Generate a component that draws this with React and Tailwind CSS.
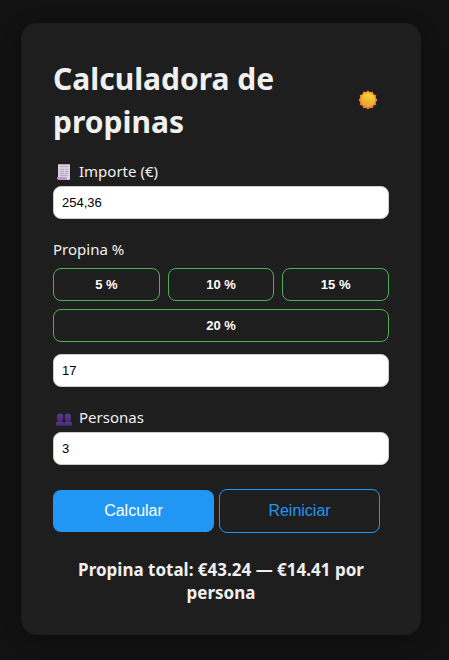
import { useState } from "react";

const FIELD =
  "block h-[33px] w-full rounded-lg border border-[#cccccc] bg-white px-2 font-['Liberation_Sans',Arial,sans-serif] text-[13px] text-black outline-none";
const TIP =
  "h-[33px] rounded-lg border border-[#4caf50] font-['Liberation_Sans',Arial,sans-serif] text-[13px] font-bold text-white";
const ACTION =
  "w-[161px] rounded-lg font-['Liberation_Sans',Arial,sans-serif] text-base";
const ICON_LABEL = "flex h-[25px] items-end gap-[7px] pl-[3px] leading-[25px]";

function SunIcon() {
  return (
    <svg viewBox="0 0 20 20" className="size-5" aria-hidden="true">
      <defs>
        <linearGradient id="sun-core" x1="0.7" y1="0" x2="0.3" y2="1">
          <stop offset="0" stopColor="#ffd83c" />
          <stop offset="1" stopColor="#dfa02f" />
        </linearGradient>
        <linearGradient id="sun-rays" x1="0" y1="0" x2="0" y2="1">
          <stop offset="0" stopColor="#ff9a2e" />
          <stop offset="1" stopColor="#ea7038" />
        </linearGradient>
      </defs>
      <path
        fill="url(#sun-rays)"
        d="M10 .5 11.8 2 14.7 1.8 15.5 4.2 18.2 5.3 17.8 7.9 19.5 10 17.8 12.1 18.2 14.7 15.5 15.8 14.7 18.2 11.8 18 10 19.5 8.2 18 5.3 18.2 4.5 15.8 1.8 14.7 2.2 12.1.5 10 2.2 7.9 1.8 5.3 4.5 4.2 5.3 1.8 8.2 2Z"
      />
      <circle cx="10" cy="10" r="7" fill="url(#sun-core)" />
    </svg>
  );
}

function ReceiptIcon() {
  return (
    <svg viewBox="0 0 16 16" className="mb-1 h-4 w-4" aria-hidden="true">
      <path fill="#d9cfe3" d="M2 .5 3 0l1 .6L5 0l1 .6L7 0l1 .6L9 0l1 .6L11 0l1 .6L13 0l1 .5V14H2Z" />
      <path
        stroke="#aaa1b8"
        strokeWidth="0.8"
        d="M4 2.500h8M4 5.500h4M9 5.500h3M4 7.500h4M9 7.500h3M4 9.500h4M9 9.500h3M4 11.500h8"
      />
      <path fill="#b79ccb" d="M1 13h9.500c0 1.200.8 1.500 1.500 1.500V16H2.500C1.500 16 1 15 1 13Z" />
      <path fill="#e2d8ec" d="M10.500 13H14v1.500c0 1-.7 1.500-1.600 1.500-1.200 0-1.900-1-1.900-3Z" />
    </svg>
  );
}

function PeopleIcon() {
  return (
    <svg viewBox="0 0 16 13" className="mb-1 h-[13px] w-4" aria-hidden="true">
      <defs>
        <linearGradient id="people" x1="0" y1="0" x2="0" y2="1">
          <stop offset="0" stopColor="#5d3a92" />
          <stop offset="1" stopColor="#4a2877" />
        </linearGradient>
      </defs>
      <g fill="url(#people)">
        <rect x="1" y="0.500" width="6.200" height="8" rx="2.800" />
        <rect x="8.800" y="0.500" width="6.200" height="8" rx="2.800" />
        <path d="M0 12.700v-2C0 9.400 1 8.500 2.400 8.500h3.200c1.300 0 2.300.8 2.300 2.200v2Z" />
        <path d="M8.100 12.700v-2c0-1.400 1-2.200 2.300-2.200h3.200c1.400 0 2.400.9 2.400 2.200v2Z" />
      </g>
    </svg>
  );
}

export default function App() {
  const [amount, setAmount] = useState("254,36");
  const [percent, setPercent] = useState("17");
  const [people, setPeople] = useState("3");
  const [result, setResult] = useState("Propina total: €43.24 — €14.41 por persona");

  const calculate = (event) => {
    event.preventDefault();
    const total = (parseFloat(amount.replace(",", ".")) * Number(percent)) / 100;
    const each = total / Number(people);
    if (Number.isFinite(each)) {
      setResult(`Propina total: €${total.toFixed(2)} — €${each.toFixed(2)} por persona`);
    }
  };

  const reset = () => {
    setAmount("");
    setPercent("");
    setPeople("1");
    setResult("");
  };

  return (
    <div className="min-h-screen bg-[#121212] pt-[23px] pr-7 pb-6 pl-[21px] font-['Noto_Sans','Open_Sans',sans-serif] text-[15px] text-[#f0f0f0]">
      <main className="mx-auto w-full max-w-[400px] rounded-2xl bg-[#1e1e1e] px-8 pt-[34px] pb-[31px] shadow-[0_4px_20px_rgba(0,0,0,0.3)]">
        <header className="flex items-center justify-between">
          <h1 className="text-3xl leading-[43px] font-bold">Calculadora de propinas</h1>
          <button type="button" aria-label="Cambiar tema" className="shrink-0 px-[11px]">
            <SunIcon />
          </button>
        </header>

        <form onSubmit={calculate}>
          <label htmlFor="amount" className={`mt-4 mb-0.5 ${ICON_LABEL}`}>
            <ReceiptIcon />
            Importe (€)
          </label>
          <input id="amount" className={FIELD} value={amount} onChange={(e) => setAmount(e.target.value)} />

          <label htmlFor="percent" className="mt-[18px] block leading-[25px]">
            Propina %
          </label>
          <div className="mt-1.5 grid grid-cols-3 gap-2">
            <button type="button" className={TIP} onClick={() => setPercent("5")}>5 %</button>
            <button type="button" className={TIP} onClick={() => setPercent("10")}>10 %</button>
            <button type="button" className={TIP} onClick={() => setPercent("15")}>15 %</button>
            <button type="button" className={`col-span-3 ${TIP}`} onClick={() => setPercent("20")}>20 %</button>
          </div>
          <div className="mt-3">
            <input
              id="percent"
              className={FIELD}
              value={percent}
              onChange={(e) => setPercent(e.target.value)}
            />
          </div>

          <label htmlFor="people" className={`mt-[18px] mb-0.5 ${ICON_LABEL}`}>
            <PeopleIcon />
            Personas
          </label>
          <input id="people" className={FIELD} value={people} onChange={(e) => setPeople(e.target.value)} />

          <div className="mt-6 flex items-center gap-[5px]">
            <button type="submit" className={`h-[42px] bg-[#2196f3] text-white ${ACTION}`}>Calcular</button>
            <button type="button" onClick={reset} className={`h-11 border border-[#2196f3] text-[#2196f3] ${ACTION}`}>
              Reiniciar
            </button>
          </div>
        </form>

        <p className="mt-[25px] text-center text-[17px] leading-[23px] font-bold" aria-live="polite">
          {result}
        </p>
      </main>
    </div>
  );
}
